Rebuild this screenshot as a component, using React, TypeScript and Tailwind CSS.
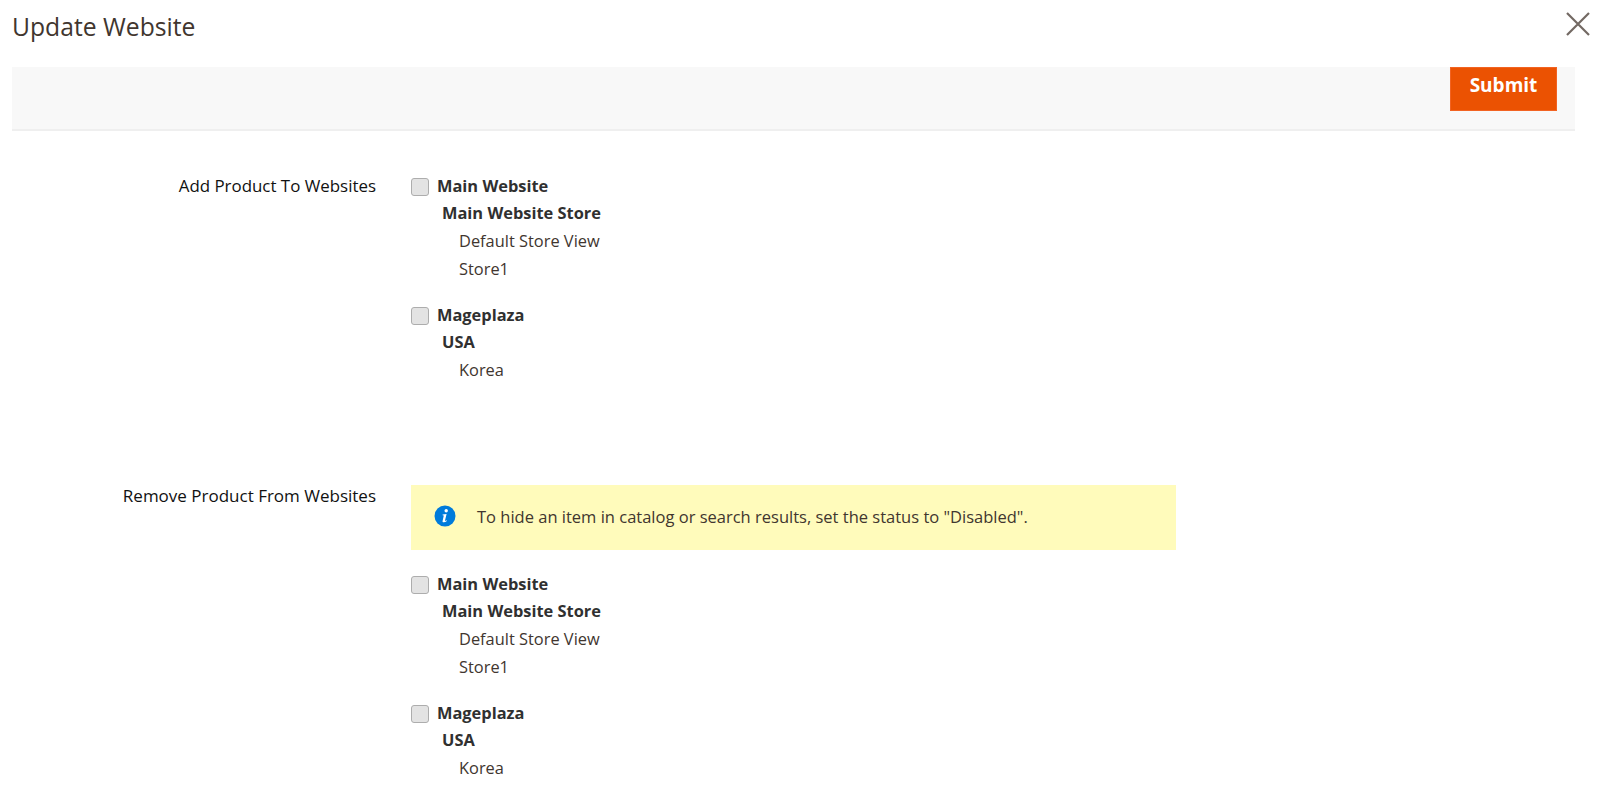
const websites = [
  { name: 'Main Website', store: 'Main Website Store', views: ['Default Store View', 'Store1'] },
  { name: 'Mageplaza', store: 'USA', views: ['Korea'] },
];

function WebsiteTree() {
  return (
    <div className="flex flex-col gap-[17px] text-[16.4px]">
      {websites.map((site) => (
        <div key={site.name}>
          <label className="flex h-[28px] items-center">
            <span className="mt-[1px] h-[18px] w-[18px] rounded-[3px] border border-[#adadad] bg-[#e3e3e3]" />
            <span className="ml-[8px] font-bold text-[#303030]">{site.name}</span>
          </label>
          <div className="ml-[31px] flex h-[28px] items-center pb-[2px] font-bold text-[#303030]">{site.store}</div>
          {site.views.map((view) => (
            <div key={view} className="ml-[48px] flex h-[28px] items-center pb-[1px] text-[#41362f]">
              {view}
            </div>
          ))}
        </div>
      ))}
    </div>
  );
}

export default function App() {
  return (
    <div className="relative h-[790px] overflow-hidden bg-white font-['Open_Sans',sans-serif] text-[16px] text-[#303030]">
      <h1 className="h-[67px] pl-[12px] pt-[9px] text-[24.7px] leading-[36px] font-normal text-[#41362f]">Update Website</h1>
      <button type="button" className="absolute right-[10px] top-[12px] text-[#736963]" aria-label="Close">
        <svg width="24" height="24" viewBox="0 0 24 24" fill="none" stroke="currentColor" strokeWidth="2.2">
          <path d="M1 1 L23 23 M23 1 L1 23" />
        </svg>
      </button>

      <div className="ml-[12px] mr-[25px] flex h-[64px] justify-end border-b-2 border-[#efefef] bg-[#f8f8f8] pr-[18px]">
        <button type="button" className="h-[44px] w-[107px] border border-[#f26322] bg-[#eb5202] pb-[8px] text-[19px] font-bold text-white">
          Submit
        </button>
      </div>

      <div className="mt-[41px] flex">
        <div className="w-[376px] pt-[1px] text-right text-[16.9px] text-[#111]">Add Product To Websites</div>
        <div className="ml-[35px]">
          <WebsiteTree />
        </div>
      </div>

      <div className="mt-[100px] flex">
        <div className="mt-[-1px] w-[376px] text-right text-[17px] leading-[24px] text-[#111]">Remove Product From Websites</div>
        <div className="ml-[35px]">
          <div className="flex h-[65px] w-[765px] items-center bg-[#fffbbb] pl-[23px] text-[16.5px] text-[#41362f]">
            <svg width="22" height="22" viewBox="0 0 22 22" className="mb-[4px]">
              <circle cx="11" cy="11" r="10.5" fill="#007bdb" />
              <circle cx="12.2" cy="5.8" r="1.7" fill="#fff" />
              <path d="M8.6 9.4 L12.6 9 L11 15.4 C10.9 16 11.4 16 12.8 15.2 L12.9 16 C11.4 17.2 10 17.6 9 17.2 C8.4 16.9 8.5 16.2 8.7 15.4 L9.8 10.6 L8.6 10.2 Z" fill="#fff" />
            </svg>
            <span className="ml-[21px]">To hide an item in catalog or search results, set the status to "Disabled".</span>
          </div>
          <div className="mt-[20px]">
            <WebsiteTree />
          </div>
        </div>
      </div>
    </div>
  );
}
